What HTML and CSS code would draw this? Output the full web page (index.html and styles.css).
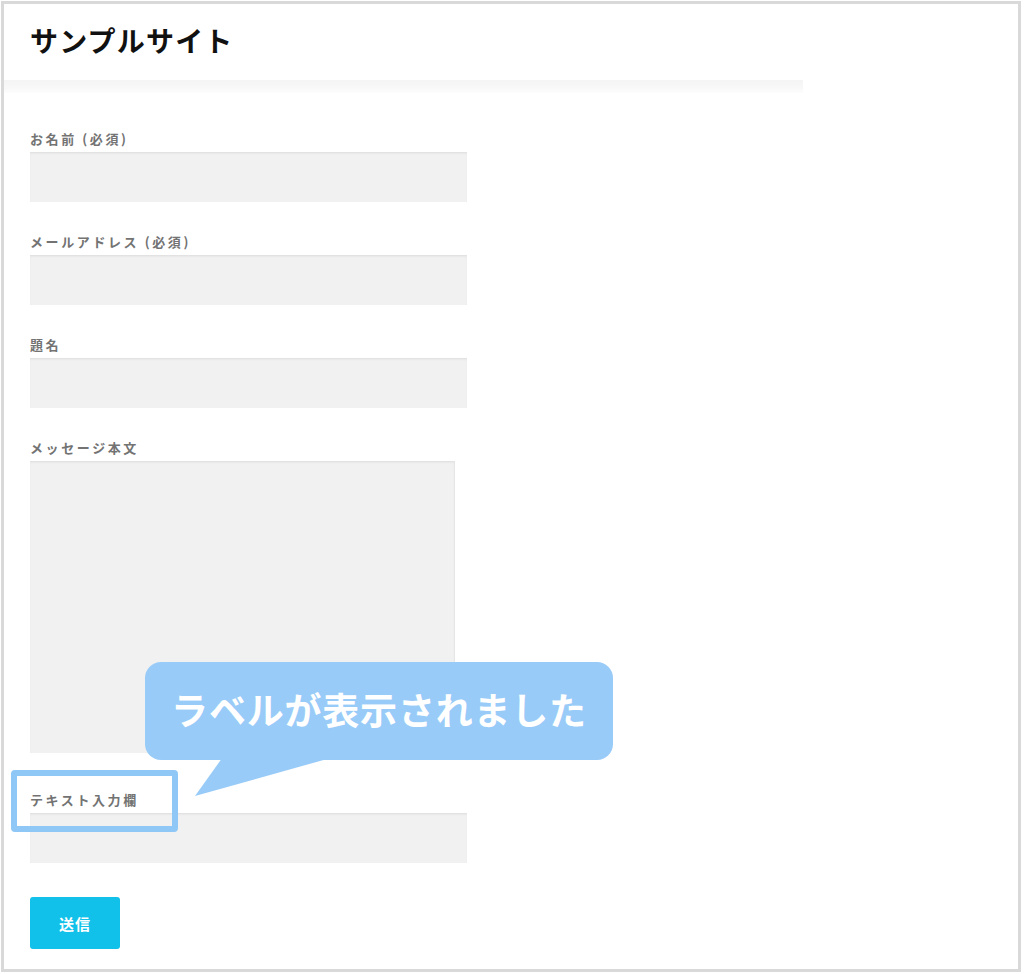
FILE: index.html
```html
<!DOCTYPE html>
<html lang="ja">
<head>
<meta charset="utf-8">
<link rel="stylesheet" href="styles.css">
</head>
<body>
<div class="frame">
  <header class="header">
    <h1 class="site-title">サンプルサイト</h1>
  </header>
  <div class="header-shade"></div>
  <form class="form">
    <div class="field">
      <label class="label">お名前 (必須)</label>
      <input class="input" type="text">
    </div>
    <div class="field">
      <label class="label">メールアドレス (必須)</label>
      <input class="input" type="text">
    </div>
    <div class="field">
      <label class="label">題名</label>
      <input class="input" type="text">
    </div>
    <div class="field field-message">
      <label class="label">メッセージ本文</label>
      <textarea class="textarea"></textarea>
    </div>
    <div class="field field-text">
      <label class="label">テキスト入力欄</label>
      <input class="input" type="text">
    </div>
    <button class="submit" type="button">送信</button>
  </form>

  <div class="highlight"></div>
  <div class="callout">
    <span class="callout-text">ラベルが表示されました</span>
  </div>
  <svg class="callout-tail" width="160" height="50" viewBox="0 0 160 50">
    <polygon points="30,0 150,0 0,42" fill="#99cbf8"/>
  </svg>
</div>
</body>
</html>
```

FILE: styles.css
```css
html, body {
  margin: 0;
  padding: 0;
  background: #fff;
}

body {
  font-family: "Noto Sans CJK JP", "Noto Sans", sans-serif;
}

.frame {
  position: relative;
  box-sizing: border-box;
  width: 1020px;
  height: 971px;
  margin: 1px 0 0 1px;
  border: 3px solid #d9d9d9;
  background: #fff;
}

.header {
  width: 799px;
  height: 76px;
  padding-left: 26px;
  box-sizing: border-box;
  display: flex;
  align-items: center;
}

.site-title {
  margin: 0;
  font-size: 28px;
  font-weight: 700;
  color: #111;
  letter-spacing: 1.2px;
  line-height: 1;
  margin-top: -4px;
}

.header-shade {
  width: 799px;
  height: 13px;
  background: linear-gradient(#f4f4f4, #f8f8f8 60%, #fdfdfd);
}

.form {
  padding: 37px 26px 0;
  display: flex;
  flex-direction: column;
  align-items: flex-start;
}

.field {
  display: flex;
  flex-direction: column;
  gap: 4px;
  margin-bottom: 31px;
}

.field-message {
  margin-bottom: 38px;
}

.field-text {
  margin-bottom: 34px;
}

.label {
  font-size: 13px;
  line-height: 18px;
  font-weight: 700;
  color: #737373;
  letter-spacing: 2.6px;
}

.input,
.textarea {
  display: block;
  box-sizing: border-box;
  width: 437px;
  height: 50px;
  margin: 0;
  padding: 0;
  border: none;
  border-top: 1px solid #e2e2e2;
  background: #f1f1f1;
  box-shadow: inset 0 1px 2px rgba(0, 0, 0, 0.04);
  outline: none;
}

.textarea {
  width: 425px;
  height: 292px;
  resize: none;
  border-right: 1px solid #e6e6e6;
}

.submit {
  width: 90px;
  height: 52px;
  border: none;
  border-radius: 3px;
  background: #11c1e9;
  color: #fff;
  font-family: "Noto Sans CJK JP", sans-serif;
  font-size: 15px;
  font-weight: 700;
  letter-spacing: 1px;
  cursor: pointer;
}

.highlight {
  position: absolute;
  left: 7px;
  top: 766px;
  width: 155px;
  height: 50px;
  border: 6px solid #8fc7f7;
  border-radius: 4px;
}

.callout {
  position: absolute;
  left: 141px;
  top: 658px;
  width: 468px;
  height: 98px;
  border-radius: 16px;
  background: #99cbf8;
  display: flex;
  align-items: center;
  justify-content: center;
}

.callout-text {
  color: #fff;
  font-size: 37px;
  font-weight: 700;
  letter-spacing: 0.8px;
  line-height: 1;
  margin-top: -4px;
}

.callout-tail {
  position: absolute;
  left: 191px;
  top: 750px;
  display: block;
}
```
